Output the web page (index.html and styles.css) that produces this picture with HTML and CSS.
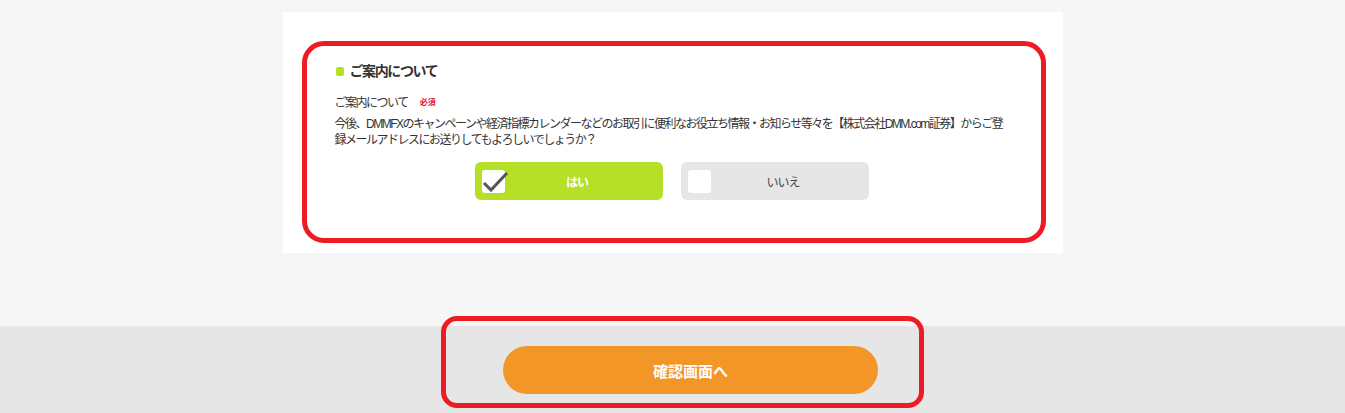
FILE: index.html
```html
<!DOCTYPE html>
<html lang="ja">
<head>
    <meta charset="UTF-8">
    <meta name="viewport" content="width=device-width, initial-scale=1.0">
    <title>ご案内について</title>
    <link rel="stylesheet" href="styles.css">
</head>
<body>
    <div class="main">
        <div class="card">
            <div class="mark">
                <h3 class="title"><span class="bullet"></span>ご案内について</h3>
                <p class="label">ご案内について<span class="req">必須</span></p>
                <p class="desc">今後、DMMFXのキャンペーンや経済指標カレンダーなどのお取引に便利なお役立ち情報・お知らせ等々を【株式会社DMM.com証券】からご登録メールアドレスにお送りしてもよろしいでしょうか？</p>
                <div class="choices">
                    <label class="choice on">
                        <span class="box">
                            <svg class="check" width="26" height="24" viewBox="0 0 26 24"><polyline points="1,13 8,20 24,3" fill="none" stroke="#555" stroke-width="3"/></svg>
                        </span>
                        <span class="text">はい</span>
                    </label>
                    <label class="choice">
                        <span class="box"></span>
                        <span class="text">いいえ</span>
                    </label>
                </div>
            </div>
        </div>
    </div>

    <div class="footer">
        <div class="mark2">
            <button class="submit">確認画面へ</button>
        </div>
    </div>
</body>
</html>
```

FILE: styles.css
```css
body {
    margin: 0;
    background: #f6f6f6;
    font-family: "Liberation Sans", "Noto Sans CJK JP", sans-serif;
    color: #333;
}
.main { padding: 12px 0 73px; }
.card {
    width: 780px;
    margin: 0 auto;
    background: #fff;
    padding: 29px 17px 10px 19px;
    box-sizing: border-box;
}
.mark {
    border: 5px solid #ed1c24;
    border-radius: 22px;
    padding: 15px 28px 38px;
}
.title {
    margin: 0;
    font-size: 14px;
    line-height: 20px;
    font-weight: bold;
    letter-spacing: -1.4px;
    display: flex;
    align-items: center;
}
.bullet {
    width: 8px;
    height: 9px;
    background: #b5e027;
    border-radius: 2px;
    margin: 0 6px 0 1px;
}
.label {
    margin: 14px 0 0;
    font-size: 12px;
    line-height: 16px;
    letter-spacing: -1.5px;
}
.req {
    color: #e8102c;
    font-size: 8px;
    font-weight: bold;
    letter-spacing: 0;
    margin-left: 12px;
    vertical-align: 2px;
}
.desc {
    margin: 5px 0 0;
    font-size: 12px;
    line-height: 16px;
    letter-spacing: -1.5px;
}
.choices {
    margin-top: 14px;
    display: flex;
    justify-content: center;
    gap: 18px;
    margin-left: -3px;
}
.choice {
    width: 188px;
    height: 38px;
    border-radius: 6px;
    background: #e6e6e6;
    display: flex;
    align-items: center;
    padding: 0 7px;
    box-sizing: border-box;
    cursor: pointer;
}
.choice.on { background: #b5e027; }
.box {
    position: relative;
    width: 23px;
    height: 23px;
    background: #fff;
    border-radius: 3px;
    flex-shrink: 0;
}
.check { position: absolute; left: 1px; top: 0; overflow: visible; }
.text {
    flex: 1;
    text-align: center;
    font-size: 12px;
    letter-spacing: -1px;
    padding-right: 7px;
    color: #444;
}
.choice.on .text { color: #fff; font-weight: bold; }
.footer {
    background: #e6e6e6;
    padding-bottom: 10px;
}
.mark2 {
    position: relative;
    top: -10px;
    margin-left: 441px;
    width: 483px;
    height: 92px;
    box-sizing: border-box;
    border: 5px solid #ed1c24;
    border-radius: 16px;
    padding: 25px 0 0 57px;
}
.submit {
    width: 375px;
    height: 48px;
    border: none;
    border-radius: 24px;
    background: #f39628;
    color: #fff;
    font-family: inherit;
    font-size: 15px;
    font-weight: bold;
    cursor: pointer;
}
```
